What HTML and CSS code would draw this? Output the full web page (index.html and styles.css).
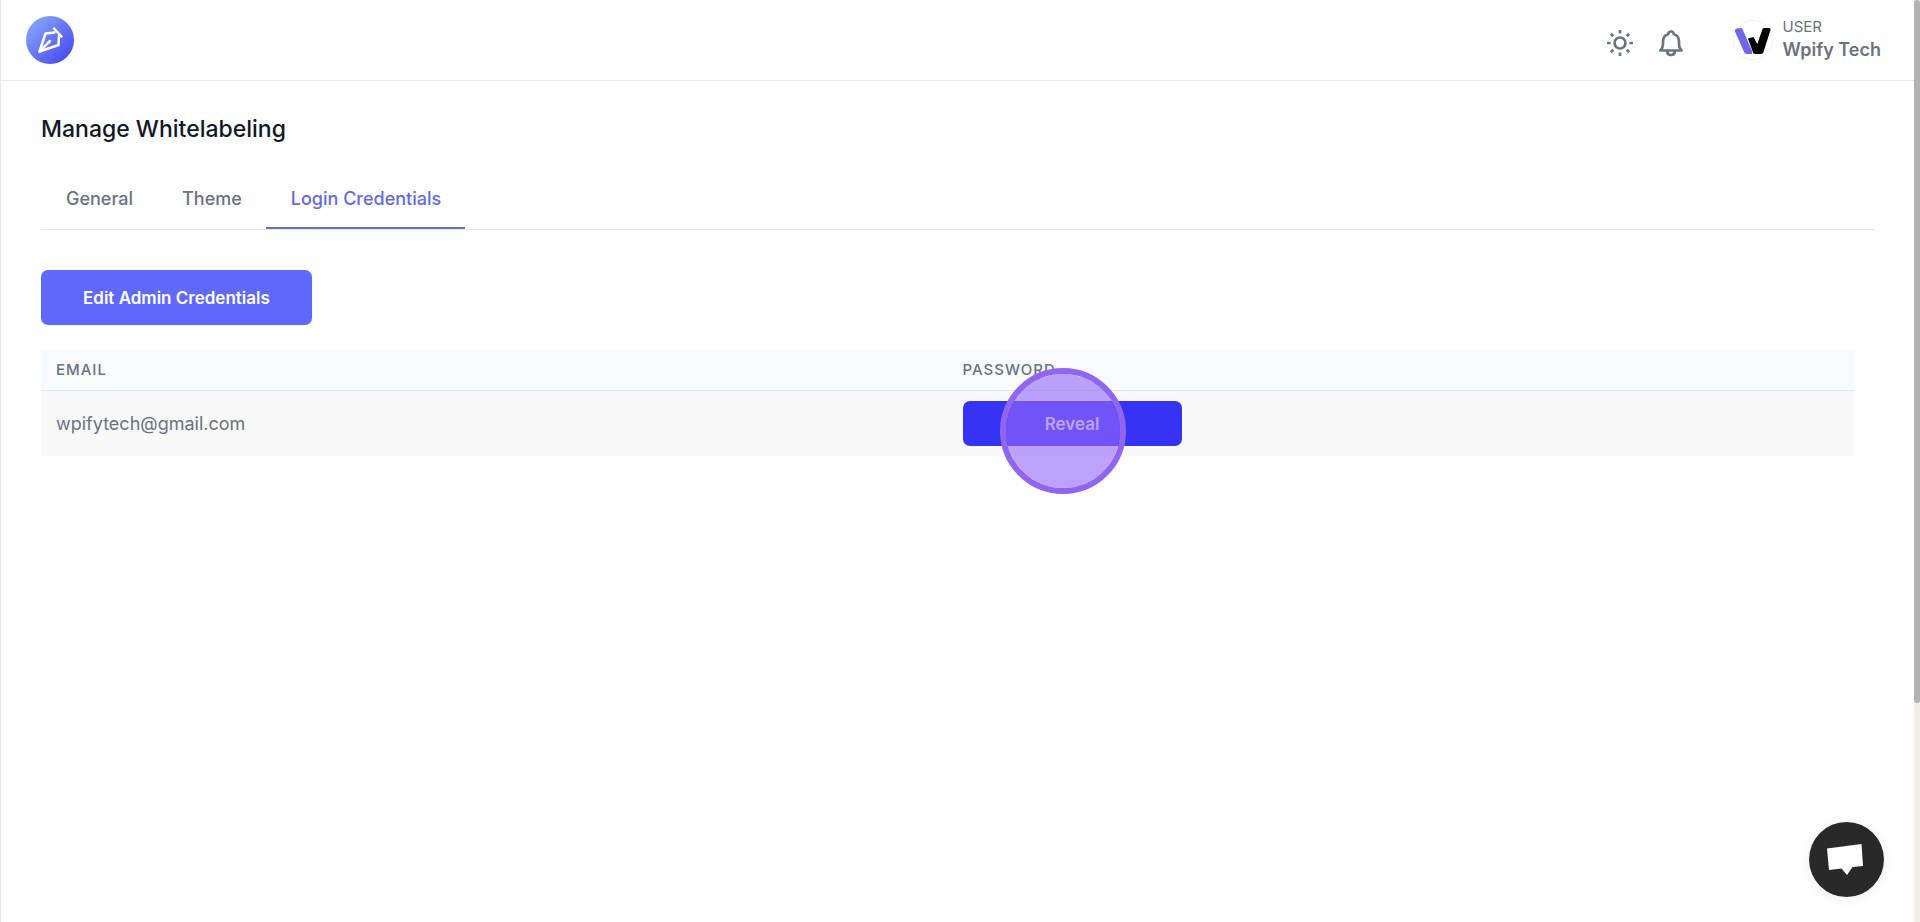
FILE: index.html
```html
<!DOCTYPE html>
<html lang="en">
<head>
    <meta charset="UTF-8">
    <meta name="viewport" content="width=device-width, initial-scale=1.0">
    <title>Manage Whitelabeling</title>
    <link rel="stylesheet" href="styles.css">
</head>
<body>
    <header class="topbar">
        <a class="logo" href="#" aria-label="Home">
            <svg width="48" height="48" viewBox="0 0 48 48">
                <defs>
                    <linearGradient id="logoFill" x1="0" y1="0" x2="1" y2="1">
                        <stop offset="0.1" stop-color="#86a6f7"/>
                        <stop offset="0.85" stop-color="#4c4ff0"/>
                    </linearGradient>
                </defs>
                <circle cx="24" cy="24" r="24" fill="url(#logoFill)"/>
                <g fill="none" stroke="#fff" stroke-width="2.5" stroke-linecap="round" stroke-linejoin="round">
                    <path d="M28 12.500L35.500 20.500"/>
                    <path d="M28.500 16.500L19.500 17.500L16 28L13.500 35.500L32.500 29L33 19.500"/>
                    <path d="M13.500 35.500L24 25"/>
                </g>
            </svg>
        </a>
        <div class="topbar-right">
            <button type="button" class="icon-button" aria-label="Toggle theme">
                <svg width="28" height="28" viewBox="0 0 28 28" fill="none" stroke="#6b7280" stroke-width="2.7">
                    <circle cx="14" cy="14" r="5.500"/>
                    <path d="M14 1v3.600M14 23.400V27M1 14h3.600M23.400 14H27M4.800 4.800l2.500 2.500M20.700 20.700l2.500 2.500M4.800 23.200l2.500-2.500M20.700 7.300l2.500-2.500"/>
                </svg>
            </button>
            <button type="button" class="icon-button" aria-label="Notifications">
                <svg width="28" height="28" viewBox="0 0 28 28" fill="none" stroke="#6b7280" stroke-width="2.700" stroke-linejoin="round" stroke-linecap="round">
                    <path d="M3.500 21.500h21c-2-2-2.500-3.500-2.500-6.500v-2.500c0-4-2.300-6.500-5.200-7.300C16.600 3.300 15.700 2.500 14 2.500s-2.600.8-2.800 2.700C8.300 6 6 8.500 6 12.500V15c0 3-.5 4.500-2.500 6.500z"/>
                    <path d="M10 22c.3 2.600 1.800 4 4 4s3.700-1.400 4-4"/>
                </svg>
            </button>
            <a class="profile" href="#">
                <svg class="avatar" width="40" height="40" viewBox="0 0 40 40">
                    <circle cx="20" cy="20" r="19.500" fill="#fff" stroke="#f3f3f3"/>
                    <path d="M2 17.500Q1.500 15 4 14.500L8 14Q9 14 9.500 15L19 37V40H14Q12 40 11 38z" transform="translate(0 -6)" fill="#6f66ee"/>
                    <path d="M15 24.500L20.500 23L24.300 30L29.500 15Q30 14 31 14H36Q38 14 37.500 16L30.500 38Q30 40 28 40H22Q20.500 40 20 38.500z" transform="translate(0 -6)" fill="#000"/>
                </svg>
                <span class="profile-text">
                    <span class="profile-role">USER</span>
                    <span class="profile-name">Wpify Tech</span>
                </span>
            </a>
        </div>
    </header>

    <main class="content">
        <h1>Manage Whitelabeling</h1>
        <nav class="tabs">
            <a class="tab" href="#">General</a>
            <a class="tab" href="#">Theme</a>
            <a class="tab active" href="#">Login Credentials</a>
        </nav>
        <button type="button" class="button edit-button">Edit Admin Credentials</button>
        <table class="credentials">
            <thead>
                <tr>
                    <th>EMAIL</th>
                    <th>PASSWORD</th>
                </tr>
            </thead>
            <tbody>
                <tr>
                    <td>wpifytech@gmail.com</td>
                    <td>
                        <div class="reveal">
                            <button type="button" class="button reveal-button">Reveal</button>
                            <span class="click-marker"></span>
                        </div>
                    </td>
                </tr>
            </tbody>
        </table>
    </main>

    <button type="button" class="chat-button" aria-label="Open chat">
        <svg width="40" height="32" viewBox="0 0 40 32">
            <path d="M0 4.500L34.500 0L36 22L25.500 23L20 31L14.500 24.500L2 26z" fill="#fff"/>
        </svg>
    </button>
    <div class="scroll-track"><div class="scroll-thumb"></div></div>
</body>
</html>
```
FILE: styles.css
```css
* {
    box-sizing: border-box;
}

body {
    margin: 0;
    min-height: 100vh;
    padding-right: 6px;
    border-left: 1px solid #e5e7eb;
    background-color: #fefefe;
    color: #6b7280;
    font-family: Inter, sans-serif;
    font-size: 18px;
    line-height: 24px;
}

a {
    color: inherit;
    text-decoration: none;
}

button {
    padding: 0;
    border: none;
    font: inherit;
    cursor: pointer;
}

svg {
    display: block;
}

.topbar {
    display: flex;
    align-items: center;
    justify-content: space-between;
    height: 81px;
    padding: 0 33px 0 25px;
    border-bottom: 1px solid #e5e7eb;
}

.topbar-right {
    display: flex;
    align-items: center;
    gap: 23px;
}

.icon-button {
    margin-top: 5px;
    background: none;
}

.profile {
    display: flex;
    align-items: center;
    gap: 10px;
    margin-left: 25px;
}

.profile-text {
    display: flex;
    flex-direction: column;
    padding-bottom: 2px;
}

.profile-role {
    font-size: 15px;
    line-height: 22px;
}

.profile-name {
    font-weight: 600;
}

.content {
    padding: 32px 40px;
}

h1 {
    margin: 0 0 32px;
    color: #111827;
    font-size: 23px;
    font-weight: 500;
    line-height: 32px;
}

.tabs {
    display: flex;
    margin-bottom: 40px;
    border-bottom: 1px solid #e5e7eb;
}

.tab {
    padding: 10px 24px 16px 25px;
    border-bottom: 2px solid transparent;
    font-weight: 500;
}

.active {
    border-color: #6b72b8;
    color: #656ae0;
}

.button {
    display: block;
    border-radius: 7px;
    color: #fff;
    font-size: 17px;
    font-weight: 600;
}

.edit-button {
    height: 55px;
    padding: 0 42px;
    background-color: #5f69fe;
}

.credentials {
    width: calc(100% - 20px);
    margin-top: 25px;
    border-collapse: collapse;
    table-layout: fixed;
    text-align: left;
}

.credentials th {
    padding: 8px 15px;
    border-bottom: 1px solid #e2e5ec;
    background-color: #f8fafc;
    font-size: 15px;
    font-weight: 500;
    letter-spacing: 1px;
}

.credentials td {
    padding: 10px 15px;
    background-color: #f9f9f9;
}

.reveal {
    position: relative;
    width: 219px;
}

.reveal-button {
    width: 100%;
    height: 45px;
    background-color: #3733f5;
}

/* ring around the clicked spot */
.click-marker {
    position: absolute;
    top: -33px;
    left: 37px;
    width: 126px;
    height: 126px;
    border: 6px solid #9065f2;
    border-radius: 50%;
    background-color: rgba(147, 105, 249, 0.62);
    background-clip: padding-box;
    pointer-events: none;
}

.chat-button {
    position: fixed;
    right: 36px;
    bottom: 25px;
    display: flex;
    align-items: center;
    justify-content: center;
    width: 75px;
    height: 75px;
    border-radius: 50%;
    background-color: #292929;
    box-shadow: 0 2px 12px rgba(0, 0, 0, 0.06);
}

.scroll-track {
    position: fixed;
    top: 0;
    right: 0;
    bottom: 0;
    width: 6px;
    background-color: #f0edea;
}

.scroll-thumb {
    height: 76.3%;
    border-radius: 3px;
    background-color: #b2b2b2;
}
```
